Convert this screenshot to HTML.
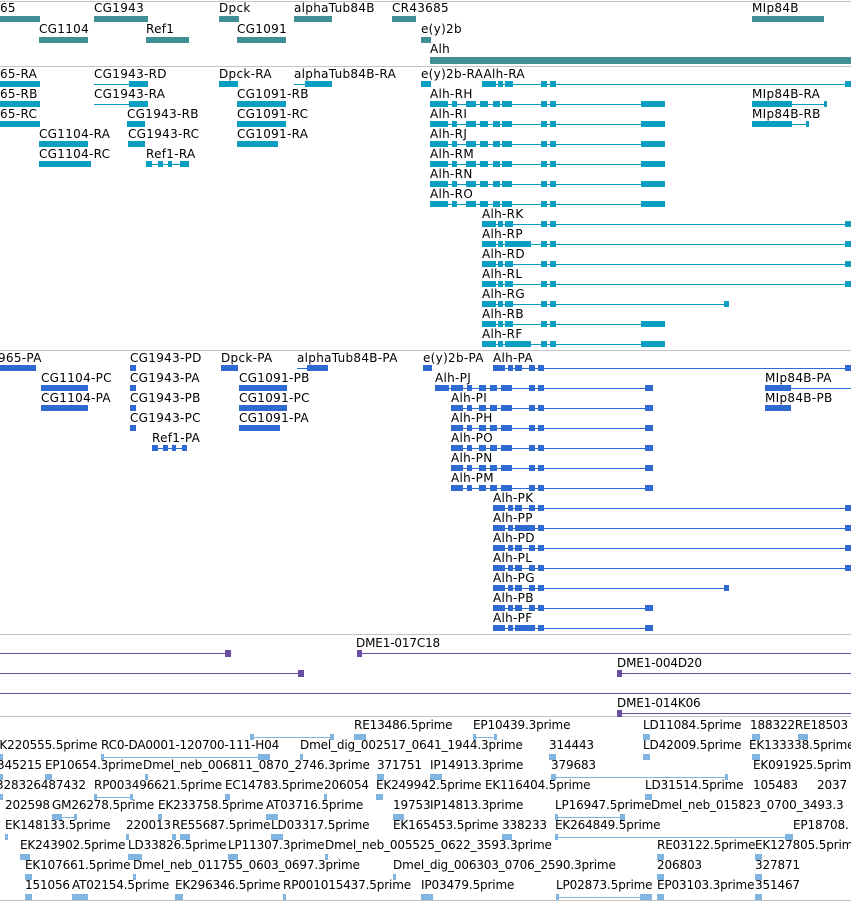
<!DOCTYPE html>
<html><head><meta charset="utf-8"><style>
body{margin:0;width:851px;height:902px;overflow:hidden;background:#fff;position:relative}
.t{position:absolute;font:12px "DejaVu Sans",sans-serif;line-height:14px;white-space:nowrap;color:#000;letter-spacing:0.3px}
.t.e{letter-spacing:-0.15px;font-size:12px}
svg{position:absolute;left:0;top:0}
</style></head><body>
<svg width="851" height="902">
<defs>
<g id="ah"><rect x="430" y="0" width="235" height="1"/><rect x="430" y="-3" width="18" height="6"/><rect x="452" y="-3" width="5" height="6"/><rect x="466" y="-3" width="10" height="6"/><rect x="480" y="-3" width="8" height="6"/><rect x="493" y="-3" width="7" height="6"/><rect x="502" y="-3" width="10" height="6"/><rect x="541" y="-3" width="6" height="6"/><rect x="550" y="-3" width="6" height="6"/><rect x="641" y="-3" width="24" height="6"/></g>
<g id="ac"><rect x="482" y="-3" width="14" height="6"/><rect x="498" y="-3" width="5" height="6"/><rect x="505" y="-3" width="8" height="6"/><rect x="541" y="-3" width="6" height="6"/><rect x="550" y="-3" width="6" height="6"/></g>
<g id="ak"><use href="#ac"/><rect x="482" y="0" width="369" height="1"/><rect x="845" y="-3" width="6" height="6"/></g>
<g id="ag"><use href="#ac"/><rect x="482" y="0" width="247" height="1"/><rect x="724" y="-3" width="5" height="6"/></g>
<g id="ab"><use href="#ac"/><rect x="482" y="0" width="183" height="1"/><rect x="641" y="-3" width="24" height="6"/></g>
<g id="pi"><rect x="451" y="0" width="202" height="1"/><rect x="451" y="-3" width="12" height="6"/><rect x="467" y="-3" width="5" height="6"/><rect x="479" y="-3" width="7" height="6"/><rect x="490" y="-3" width="7" height="6"/><rect x="501" y="-3" width="11" height="6"/><rect x="529" y="-3" width="6" height="6"/><rect x="538" y="-3" width="6" height="6"/><rect x="645" y="-3" width="8" height="6"/></g>
<g id="pc"><rect x="493" y="-3" width="12" height="6"/><rect x="508" y="-3" width="5" height="6"/><rect x="515" y="-3" width="7" height="6"/><rect x="529" y="-3" width="6" height="6"/><rect x="538" y="-3" width="6" height="6"/></g>
<g id="pk"><use href="#pc"/><rect x="493" y="0" width="358" height="1"/><rect x="845" y="-3" width="6" height="6"/></g>
<g id="pg"><use href="#pc"/><rect x="493" y="0" width="236" height="1"/><rect x="724" y="-3" width="5" height="6"/></g>
<g id="pb"><use href="#pc"/><rect x="493" y="0" width="160" height="1"/><rect x="645" y="-3" width="8" height="6"/></g>
</defs>
<g fill="#c4c4c4"><rect x="0" y="1" width="851" height="1"/><rect x="0" y="66" width="851" height="1"/><rect x="0" y="350" width="851" height="1"/><rect x="0" y="634" width="851" height="1"/><rect x="0" y="716" width="851" height="1"/><rect x="0" y="900" width="851" height="1"/></g>
<g fill="#3f8f95">
<rect x="0" y="16" width="40" height="6"/><rect x="94" y="16" width="54" height="6"/><rect x="219" y="16" width="20" height="6"/><rect x="294" y="16" width="38" height="6"/><rect x="392" y="16" width="24" height="6"/><rect x="752" y="16" width="72" height="6"/>
<rect x="39" y="37" width="49" height="6"/><rect x="146" y="37" width="43" height="6"/><rect x="237" y="37" width="49" height="6"/><rect x="421" y="37" width="10" height="6"/>
<rect x="430" y="57" width="421" height="7"/>
</g>
<g fill="#0a9fc1">
<rect x="0" y="81" width="40" height="6"/><rect x="94" y="84" width="54" height="1"/><rect x="129" y="81" width="19" height="6"/><rect x="219" y="81" width="19" height="6"/><rect x="294" y="84" width="38" height="1"/><rect x="305" y="81" width="27" height="6"/><rect x="421" y="81" width="10" height="6"/><use href="#ak" y="84"/>
<rect x="0" y="101" width="40" height="6"/><rect x="94" y="104" width="54" height="1"/><rect x="129" y="101" width="19" height="6"/><rect x="237" y="101" width="49" height="6"/><use href="#ah" y="104"/><rect x="752" y="104" width="75" height="1"/><rect x="752" y="101" width="40" height="6"/><rect x="824" y="101" width="3" height="6"/>
<rect x="0" y="121" width="40" height="6"/><rect x="127" y="121" width="18" height="6"/><rect x="237" y="121" width="49" height="6"/><use href="#ah" y="124"/><rect x="752" y="124" width="57" height="1"/><rect x="752" y="121" width="40" height="6"/><rect x="806" y="121" width="3" height="6"/>
<rect x="39" y="141" width="49" height="6"/><rect x="128" y="141" width="17" height="6"/><rect x="237" y="141" width="41" height="6"/><use href="#ah" y="144"/>
<rect x="39" y="161" width="52" height="6"/><rect x="146" y="164" width="43" height="1"/><rect x="146" y="161" width="6" height="6"/><rect x="158" y="161" width="5" height="6"/><rect x="168" y="161" width="4" height="6"/><rect x="180" y="161" width="9" height="6"/><use href="#ah" y="164"/>
<use href="#ah" y="184"/><use href="#ah" y="204"/>
<use href="#ak" y="224"/><use href="#ak" y="244"/><rect x="505" y="241" width="26" height="6"/><use href="#ak" y="264"/><use href="#ak" y="284"/><use href="#ag" y="304"/><use href="#ab" y="324"/><use href="#ab" y="344"/><rect x="505" y="341" width="26" height="6"/>
</g>
<g fill="#2f6ad2">
<rect x="0" y="365" width="36" height="6"/><rect x="130" y="365" width="6" height="6"/><rect x="221" y="365" width="17" height="6"/><rect x="297" y="368" width="31" height="1"/><rect x="307" y="365" width="21" height="6"/><rect x="423" y="365" width="9" height="6"/><use href="#pk" y="368"/>
<rect x="41" y="385" width="47" height="6"/><rect x="130" y="385" width="6" height="6"/><rect x="239" y="385" width="48" height="6"/><rect x="435" y="385" width="14" height="6"/><use href="#pi" y="388"/><rect x="435" y="388" width="20" height="1"/><rect x="765" y="385" width="26" height="6"/><rect x="765" y="388" width="86" height="1"/>
<rect x="41" y="405" width="47" height="6"/><rect x="130" y="405" width="6" height="6"/><rect x="239" y="405" width="48" height="6"/><use href="#pi" y="408"/><rect x="765" y="405" width="26" height="6"/>
<rect x="130" y="425" width="6" height="6"/><rect x="239" y="425" width="41" height="6"/><use href="#pi" y="428"/>
<rect x="152" y="448" width="35" height="1"/><rect x="152" y="445" width="6" height="6"/><rect x="163" y="445" width="5" height="6"/><rect x="172" y="445" width="4" height="6"/><rect x="182" y="445" width="5" height="6"/><use href="#pi" y="448"/>
<use href="#pi" y="468"/><use href="#pi" y="488"/>
<use href="#pk" y="508"/><use href="#pk" y="528"/><rect x="515" y="525" width="16" height="6"/><use href="#pk" y="548"/><use href="#pk" y="568"/><use href="#pg" y="588"/><use href="#pb" y="608"/><use href="#pb" y="628"/><rect x="515" y="625" width="16" height="6"/>
</g>
<g fill="#6a4fa3">
<rect x="0" y="653" width="230" height="1"/><rect x="225" y="650" width="6" height="7"/><rect x="357" y="653" width="494" height="1"/><rect x="357" y="650" width="5" height="7"/>
<rect x="0" y="673" width="303" height="1"/><rect x="298" y="670" width="6" height="7"/><rect x="617" y="673" width="234" height="1"/><rect x="617" y="670" width="5" height="7"/>
<rect x="0" y="693" width="851" height="1"/>
<rect x="617" y="713" width="234" height="1"/><rect x="617" y="710" width="5" height="7"/>
</g>
<g fill="#7fb5e0">
<rect x="354" y="734" width="12" height="6"/><rect x="473" y="737" width="24" height="1"/><rect x="473" y="734" width="3" height="6"/><rect x="494" y="734" width="3" height="6"/><rect x="643" y="734" width="7" height="6"/><rect x="752" y="734" width="8" height="6"/><rect x="798" y="734" width="10" height="6"/><rect x="250" y="737" width="84" height="1"/><rect x="250" y="734" width="4" height="6"/><rect x="330" y="734" width="4" height="6"/>
<rect x="0" y="754" width="3" height="6"/><rect x="101" y="757" width="169" height="1"/><rect x="101" y="754" width="3" height="6"/><rect x="258" y="754" width="12" height="6"/><rect x="300" y="754" width="3" height="6"/><rect x="549" y="754" width="7" height="6"/><rect x="643" y="754" width="7" height="6"/><rect x="752" y="754" width="8" height="6"/>
<rect x="0" y="774" width="3" height="6"/><rect x="45" y="774" width="7" height="6"/><rect x="145" y="774" width="3" height="6"/><rect x="377" y="774" width="7" height="6"/><rect x="430" y="774" width="12" height="6"/><rect x="551" y="777" width="177" height="1"/><rect x="551" y="774" width="5" height="6"/><rect x="725" y="774" width="3" height="6"/>
<rect x="0" y="794" width="3" height="6"/><rect x="94" y="797" width="39" height="1"/><rect x="94" y="794" width="3" height="6"/><rect x="130" y="794" width="3" height="6"/><rect x="225" y="794" width="5" height="6"/><rect x="324" y="794" width="3" height="6"/><rect x="376" y="794" width="7" height="6"/><rect x="645" y="794" width="7" height="6"/>
<rect x="52" y="817" width="25" height="1"/><rect x="52" y="814" width="10" height="6"/><rect x="74" y="814" width="3" height="6"/><rect x="158" y="814" width="4" height="6"/><rect x="266" y="814" width="12" height="6"/><rect x="393" y="814" width="11" height="6"/><rect x="555" y="817" width="70" height="1"/><rect x="555" y="814" width="3" height="6"/><rect x="620" y="814" width="5" height="6"/>
<rect x="5" y="834" width="3" height="6"/><rect x="126" y="834" width="3" height="6"/><rect x="172" y="834" width="4" height="6"/><rect x="180" y="834" width="10" height="6"/><rect x="271" y="834" width="12" height="6"/><rect x="502" y="834" width="10" height="6"/><rect x="555" y="837" width="238" height="1"/><rect x="555" y="834" width="3" height="6"/><rect x="785" y="834" width="8" height="6"/>
<rect x="20" y="854" width="10" height="6"/><rect x="128" y="854" width="14" height="6"/><rect x="228" y="854" width="10" height="6"/><rect x="325" y="854" width="3" height="6"/><rect x="657" y="854" width="7" height="6"/><rect x="755" y="854" width="7" height="6"/>
<rect x="25" y="874" width="7" height="6"/><rect x="133" y="874" width="3" height="6"/><rect x="393" y="874" width="3" height="6"/><rect x="657" y="874" width="7" height="6"/><rect x="755" y="874" width="7" height="6"/>
<rect x="25" y="894" width="7" height="6"/><rect x="72" y="894" width="16" height="6"/><rect x="175" y="894" width="8" height="6"/><rect x="283" y="894" width="3" height="6"/><rect x="421" y="894" width="12" height="6"/><rect x="556" y="897" width="96" height="1"/><rect x="556" y="894" width="3" height="6"/><rect x="640" y="894" width="12" height="6"/><rect x="657" y="894" width="7" height="6"/><rect x="755" y="894" width="7" height="6"/>
</g>
</svg>
<div class="t" style="left:0;top:1px">65</div><div class="t" style="left:94px;top:1px">CG1943</div><div class="t" style="left:219px;top:1px">Dpck</div><div class="t" style="left:294px;top:1px">alphaTub84B</div><div class="t" style="left:392px;top:1px">CR43685</div><div class="t" style="left:752px;top:1px">MIp84B</div>
<div class="t" style="left:39px;top:22px">CG1104</div><div class="t" style="left:146px;top:22px">Ref1</div><div class="t" style="left:237px;top:22px">CG1091</div><div class="t" style="left:421px;top:22px">e(y)2b</div>
<div class="t" style="left:430px;top:42px">Alh</div>
<div class="t" style="left:0;top:67px">65-RA</div><div class="t" style="left:94px;top:67px">CG1943-RD</div><div class="t" style="left:219px;top:67px">Dpck-RA</div><div class="t" style="left:294px;top:67px">alphaTub84B-RA</div><div class="t" style="left:421px;top:67px">e(y)2b-RAAlh-RA</div>
<div class="t" style="left:0;top:87px">65-RB</div><div class="t" style="left:94px;top:87px">CG1943-RA</div><div class="t" style="left:237px;top:87px">CG1091-RB</div><div class="t" style="left:430px;top:87px">Alh-RH</div><div class="t" style="left:752px;top:87px">MIp84B-RA</div>
<div class="t" style="left:0;top:107px">65-RC</div><div class="t" style="left:127px;top:107px">CG1943-RB</div><div class="t" style="left:237px;top:107px">CG1091-RC</div><div class="t" style="left:430px;top:107px">Alh-RI</div><div class="t" style="left:752px;top:107px">MIp84B-RB</div>
<div class="t" style="left:39px;top:127px">CG1104-RA</div><div class="t" style="left:128px;top:127px">CG1943-RC</div><div class="t" style="left:237px;top:127px">CG1091-RA</div><div class="t" style="left:430px;top:127px">Alh-RJ</div>
<div class="t" style="left:39px;top:147px">CG1104-RC</div><div class="t" style="left:146px;top:147px">Ref1-RA</div><div class="t" style="left:430px;top:147px">Alh-RM</div>
<div class="t" style="left:430px;top:167px">Alh-RN</div><div class="t" style="left:430px;top:187px">Alh-RO</div>
<div class="t" style="left:482px;top:207px">Alh-RK</div><div class="t" style="left:482px;top:227px">Alh-RP</div><div class="t" style="left:482px;top:247px">Alh-RD</div><div class="t" style="left:482px;top:267px">Alh-RL</div><div class="t" style="left:482px;top:287px">Alh-RG</div><div class="t" style="left:482px;top:307px">Alh-RB</div><div class="t" style="left:482px;top:327px">Alh-RF</div>
<div class="t" style="left:-2px;top:351px">965-PA</div><div class="t" style="left:130px;top:351px">CG1943-PD</div><div class="t" style="left:221px;top:351px">Dpck-PA</div><div class="t" style="left:297px;top:351px">alphaTub84B-PA</div><div class="t" style="left:423px;top:351px">e(y)2b-PA</div><div class="t" style="left:493px;top:351px">Alh-PA</div>
<div class="t" style="left:41px;top:371px">CG1104-PC</div><div class="t" style="left:130px;top:371px">CG1943-PA</div><div class="t" style="left:239px;top:371px">CG1091-PB</div><div class="t" style="left:435px;top:371px">Alh-PJ</div><div class="t" style="left:765px;top:371px">MIp84B-PA</div>
<div class="t" style="left:41px;top:391px">CG1104-PA</div><div class="t" style="left:130px;top:391px">CG1943-PB</div><div class="t" style="left:239px;top:391px">CG1091-PC</div><div class="t" style="left:451px;top:391px">Alh-PI</div><div class="t" style="left:765px;top:391px">MIp84B-PB</div>
<div class="t" style="left:130px;top:411px">CG1943-PC</div><div class="t" style="left:239px;top:411px">CG1091-PA</div><div class="t" style="left:451px;top:411px">Alh-PH</div>
<div class="t" style="left:152px;top:431px">Ref1-PA</div><div class="t" style="left:451px;top:431px">Alh-PO</div>
<div class="t" style="left:451px;top:451px">Alh-PN</div><div class="t" style="left:451px;top:471px">Alh-PM</div>
<div class="t" style="left:493px;top:491px">Alh-PK</div><div class="t" style="left:493px;top:511px">Alh-PP</div><div class="t" style="left:493px;top:531px">Alh-PD</div><div class="t" style="left:493px;top:551px">Alh-PL</div><div class="t" style="left:493px;top:571px">Alh-PG</div><div class="t" style="left:493px;top:591px">Alh-PB</div><div class="t" style="left:493px;top:611px">Alh-PF</div>
<div class="t e" style="left:356px;top:636px">DME1-017C18</div><div class="t e" style="left:617px;top:656px">DME1-004D20</div><div class="t e" style="left:617px;top:696px">DME1-014K06</div>
<div class="t e" style="left:354px;top:718px">RE13486.5prime</div><div class="t e" style="left:473px;top:718px">EP10439.3prime</div><div class="t e" style="left:643px;top:718px">LD11084.5prime</div><div class="t e" style="left:750px;top:718px">188322RE18503</div>
<div class="t e" style="left:-8px;top:738px">EK220555.5prime</div><div class="t e" style="left:101px;top:738px">RC0-DA0001-120700-111-H04</div><div class="t e" style="left:300px;top:738px">Dmel_dig_002517_0641_1944.3prime</div><div class="t e" style="left:549px;top:738px">314443</div><div class="t e" style="left:643px;top:738px">LD42009.5prime</div><div class="t e" style="left:749px;top:738px">EK133338.5prime</div>
<div class="t e" style="left:-3px;top:758px">345215</div><div class="t e" style="left:45px;top:758px">EP10654.3prime</div><div class="t e" style="left:143px;top:758px">Dmel_neb_006811_0870_2746.3prime</div><div class="t e" style="left:377px;top:758px">371751</div><div class="t e" style="left:430px;top:758px">IP14913.3prime</div><div class="t e" style="left:551px;top:758px">379683</div><div class="t e" style="left:753px;top:758px">EK091925.5prime</div>
<div class="t e" style="left:-4px;top:778px">328326487432</div><div class="t e" style="left:94px;top:778px">RP003496621.5prime</div><div class="t e" style="left:225px;top:778px">EC14783.5prime</div><div class="t e" style="left:324px;top:778px">206054</div><div class="t e" style="left:376px;top:778px">EK249942.5prime</div><div class="t e" style="left:485px;top:778px">EK116404.5prime</div><div class="t e" style="left:645px;top:778px">LD31514.5prime</div><div class="t e" style="left:753px;top:778px">105483</div><div class="t e" style="left:817px;top:778px">2037</div>
<div class="t e" style="left:5px;top:798px">202598</div><div class="t e" style="left:52px;top:798px">GM26278.5prime</div><div class="t e" style="left:158px;top:798px">EK233758.5prime</div><div class="t e" style="left:266px;top:798px">AT03716.5prime</div><div class="t e" style="left:393px;top:798px">19753</div><div class="t e" style="left:430px;top:798px">IP14813.3prime</div><div class="t e" style="left:555px;top:798px">LP16947.5prime</div><div class="t e" style="left:651px;top:798px">Dmel_neb_015823_0700_3493.3</div>
<div class="t e" style="left:5px;top:818px">EK148133.5prime</div><div class="t e" style="left:126px;top:818px">220013</div><div class="t e" style="left:172px;top:818px">RE55687.5prime</div><div class="t e" style="left:271px;top:818px">LD03317.5prime</div><div class="t e" style="left:393px;top:818px">EK165453.5prime</div><div class="t e" style="left:502px;top:818px">338233</div><div class="t e" style="left:555px;top:818px">EK264849.5prime</div><div class="t e" style="left:793px;top:818px">EP18708.</div>
<div class="t e" style="left:20px;top:838px">EK243902.5prime</div><div class="t e" style="left:128px;top:838px">LD33826.5prime</div><div class="t e" style="left:228px;top:838px">LP11307.3prime</div><div class="t e" style="left:325px;top:838px">Dmel_neb_005525_0622_3593.3prime</div><div class="t e" style="left:657px;top:838px">RE03122.5prime</div><div class="t e" style="left:755px;top:838px">EK127805.5prim</div>
<div class="t e" style="left:25px;top:858px">EK107661.5prime</div><div class="t e" style="left:133px;top:858px">Dmel_neb_011755_0603_0697.3prime</div><div class="t e" style="left:393px;top:858px">Dmel_dig_006303_0706_2590.3prime</div><div class="t e" style="left:657px;top:858px">206803</div><div class="t e" style="left:755px;top:858px">327871</div>
<div class="t e" style="left:25px;top:878px">151056</div><div class="t e" style="left:72px;top:878px">AT02154.5prime</div><div class="t e" style="left:175px;top:878px">EK296346.5prime</div><div class="t e" style="left:283px;top:878px">RP001015437.5prime</div><div class="t e" style="left:421px;top:878px">IP03479.5prime</div><div class="t e" style="left:556px;top:878px">LP02873.5prime</div><div class="t e" style="left:657px;top:878px">EP03103.3prime</div><div class="t e" style="left:755px;top:878px">351467</div>
</body></html>
